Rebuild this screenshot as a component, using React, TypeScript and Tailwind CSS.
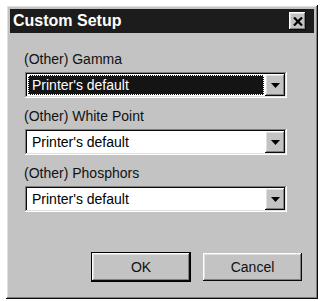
import React from 'react';

const raised =
  'shadow-[inset_-1px_-1px_#0a0a0a,inset_1px_1px_#ffffff,inset_-2px_-2px_#808080,inset_2px_2px_#dfdfdf]';
const sunken =
  'shadow-[inset_-1px_-1px_#ffffff,inset_1px_1px_#808080,inset_-2px_-2px_#dfdfdf,inset_2px_2px_#0a0a0a]';

function Combo({ focused }: { focused?: boolean }) {
  return (
    <div className={`flex h-[26px] w-[262px] items-stretch bg-white p-[2px] ${sunken}`}>
      <div className="flex flex-1 items-stretch p-[1px]">
        {focused ? (
          <div className="flex flex-1 items-center border border-dotted border-white bg-[#141414] pl-[3px] text-white">
            Printer's default
          </div>
        ) : (
          <div className="flex flex-1 items-center pl-[4px] text-black">Printer's default</div>
        )}
      </div>
      <div className={`flex w-[20px] items-center justify-center bg-[#c3c3c3] ${raised}`}>
        <svg width="9" height="5" viewBox="0 0 9 5">
          <path d="M0 0H9L4.5 5Z" fill="#000" />
        </svg>
      </div>
    </div>
  );
}

export default function App() {
  const fields = [
    { label: '(Other) Gamma', focused: true },
    { label: '(Other) White Point' },
    { label: '(Other) Phosphors' },
  ];

  return (
    <div className="h-[301px] w-[320px] bg-white pl-[6px] pt-[5px] font-['Liberation_Sans',Arial,sans-serif] text-[14px] leading-[16px]">
      <div className={`flex h-[294px] w-[312px] flex-col bg-[#c3c3c3] p-[4px] ${raised}`}>
        {/* Title bar */}
        <div className="flex h-[24px] items-center justify-between bg-[#1c1c1c] pl-[3px] pr-[8px]">
          <span className="text-[16px] font-bold text-white">Custom Setup</span>
          <div className={`flex h-[18px] w-[17px] items-center justify-center bg-[#c3c3c3] ${raised}`}>
            <svg width="10" height="9" viewBox="0 0 10 9">
              <path d="M1 0.5L9 8.5M9 0.5L1 8.5" stroke="#000" strokeWidth="2.2" />
            </svg>
          </div>
        </div>

        {/* Fields */}
        <div className="flex flex-col pl-[15px] pt-[18px]">
          {fields.map((f, i) => (
            <div key={f.label} className={`flex flex-col ${i > 0 ? 'mt-[10px]' : ''}`}>
              <span className="ml-[-1px] text-[#111]">{f.label}</span>
              <div className="mt-[5px]">
                <Combo focused={f.focused} />
              </div>
            </div>
          ))}
        </div>

        {/* Buttons */}
        <div className="mt-[40px] flex items-center justify-end gap-[12px] pr-[12px]">
          <div className="h-[30px] w-[100px] border border-black">
            <button className={`flex h-full w-full items-center justify-center bg-[#c3c3c3] text-[#111] ${raised}`}>
              OK
            </button>
          </div>
          <button className={`flex h-[28px] w-[99px] items-center justify-center bg-[#c3c3c3] text-[#111] ${raised}`}>
            Cancel
          </button>
        </div>
      </div>
    </div>
  );
}
